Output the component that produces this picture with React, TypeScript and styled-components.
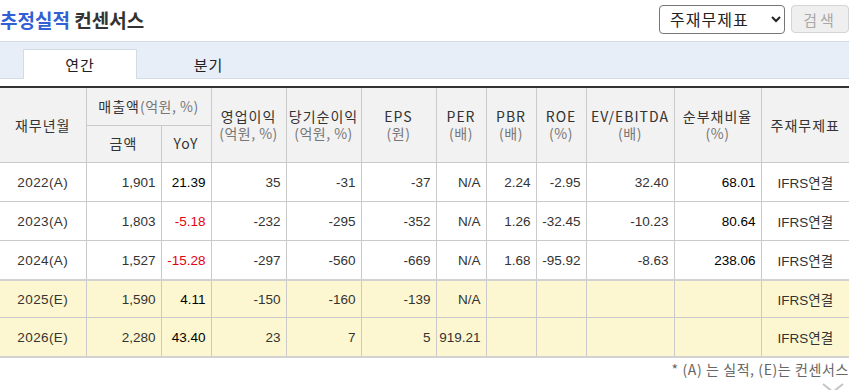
import React from 'react';
import styled, { createGlobalStyle } from 'styled-components';

const GlobalStyle = createGlobalStyle`
  body {
    margin: 0;
    background: #fff;
    font-family: "Liberation Sans", "Noto Sans CJK KR", sans-serif;
    color: #333;
  }
`;

const Page = styled.main`
  width: 849px;
`;

const TopBar = styled.header`
  display: flex;
  align-items: center;
  justify-content: space-between;
  height: 36px;
  padding-top: 2px;
  box-sizing: border-box;
`;

const Title = styled.h2`
  margin: 0;
  font-family: "Noto Sans CJK KR", sans-serif;
  font-size: 19px;
  font-weight: 700;
  color: #333;
`;

const TitleAccent = styled.span`
  color: #3161d4;
`;

const SearchBox = styled.div`
  display: flex;
  align-items: center;
  gap: 6px;
`;

const Select = styled.select`
  width: 126px;
  height: 29px;
  padding: 0 6px;
  border: 1px solid #767676;
  border-radius: 4px;
  background: #fff;
  font-family: "Noto Sans CJK KR", sans-serif;
  font-size: 16px;
  letter-spacing: 1px;
  color: #222;
`;

const SearchButton = styled.button`
  width: 58px;
  height: 28px;
  border: 1px solid #d4d4d4;
  border-radius: 4px;
  background: #efefef;
  color: #a8a8a8;
  font-family: "Noto Sans CJK KR", sans-serif;
  font-size: 15px;
  letter-spacing: 3px;
`;

const TabBar = styled.nav`
  display: flex;
  align-items: flex-end;
  height: 36px;
  margin-top: 5px;
  padding-left: 23px;
  background: #e8eef8;
  border-top: 1px solid #d3dbe6;
  border-bottom: 1px solid #d3dbe6;
`;

const Tab = styled.div<{ $active?: boolean }>`
  box-sizing: border-box;
  display: flex;
  align-items: center;
  justify-content: center;
  height: 30px;
  margin-bottom: -1px;
  width: ${(p) => (p.$active ? '114px' : '143px')};
  background: ${(p) => (p.$active ? '#fff' : 'transparent')};
  border: 1px solid ${(p) => (p.$active ? '#d3dbe6' : 'transparent')};
  border-bottom: none;
  font-family: "Noto Sans CJK KR", sans-serif;
  font-size: 15px;
  letter-spacing: 1px;
  color: #222;
`;

const Table = styled.table`
  width: 849px;
  margin-top: 7px;
  border-collapse: collapse;
  table-layout: fixed;
  border-top: 2px solid #333;
  border-bottom: 2px solid #d2d2d2;
  font-size: 13.5px;
`;

const HeadCell = styled.th`
  height: 36.5px;
  padding: 0;
  background: #f2f2f2;
  border: 1px solid #cacaca;
  border-top: none;
  font-family: "Noto Sans CJK KR", sans-serif;
  font-weight: 400;
  font-size: 14px;
  letter-spacing: 1px;
  line-height: 17px;
  color: #333;
  &:first-child { border-left: none; }
  &:last-child { border-right: none; }
`;

const Unit = styled.span`
  color: #777;
  letter-spacing: 0.5px;
`;

const Row = styled.tr<{ $estimate?: boolean; $split?: boolean }>`
  background: ${(p) => (p.$estimate ? '#fdf7d1' : '#fff')};
  border-top: ${(p) => (p.$split ? '2px solid #d2d2d2' : 'none')};
  & > td { height: ${(p) => (p.$split ? '36px' : '38px')}; }
`;

const Cell = styled.td<{ $align?: 'left' | 'center' | 'right'; $tone?: 'strong' | 'neg' }>`
  padding: 0 5px 0 0;
  border: 1px solid #cacaca;
  border-top: none;
  text-align: ${(p) => p.$align ?? 'right'};
  color: ${(p) => (p.$tone === 'strong' ? '#000' : p.$tone === 'neg' ? '#e60012' : '#333')};
  white-space: nowrap;
  &:first-child { border-left: none; padding: 0; letter-spacing: 0.4px; }
  &:last-child { border-right: none; padding: 0; }
`;

const Note = styled.p`
  margin: 2px 0 0;
  text-align: right;
  font-family: "Noto Sans CJK KR", sans-serif;
  font-size: 14px;
  line-height: 18px;
  letter-spacing: 0.6px;
  color: #666;
`;

const More = styled.div`
  display: flex;
  justify-content: flex-end;
  padding-right: 4px;
  margin-top: 4px;
`;

type Tone = 'strong' | 'neg' | undefined;
type Line = {
  period: string;
  estimate?: boolean;
  cells: [string, Tone][];
};

const rows: Line[] = [
  {
    period: '2022(A)',
    cells: [['1,901', undefined], ['21.39', 'strong'], ['35', undefined], ['-31', undefined], ['-37', undefined], ['N/A', undefined], ['2.24', undefined], ['-2.95', undefined], ['32.40', undefined], ['68.01', 'strong']],
  },
  {
    period: '2023(A)',
    cells: [['1,803', undefined], ['-5.18', 'neg'], ['-232', undefined], ['-295', undefined], ['-352', undefined], ['N/A', undefined], ['1.26', undefined], ['-32.45', undefined], ['-10.23', undefined], ['80.64', 'strong']],
  },
  {
    period: '2024(A)',
    cells: [['1,527', undefined], ['-15.28', 'neg'], ['-297', undefined], ['-560', undefined], ['-669', undefined], ['N/A', undefined], ['1.68', undefined], ['-95.92', undefined], ['-8.63', undefined], ['238.06', 'strong']],
  },
  {
    period: '2025(E)',
    estimate: true,
    cells: [['1,590', undefined], ['4.11', 'strong'], ['-150', undefined], ['-160', undefined], ['-139', undefined], ['N/A', undefined], ['', undefined], ['', undefined], ['', undefined], ['', undefined]],
  },
  {
    period: '2026(E)',
    estimate: true,
    cells: [['2,280', undefined], ['43.40', 'strong'], ['23', undefined], ['7', undefined], ['5', undefined], ['919.21', undefined], ['', undefined], ['', undefined], ['', undefined], ['', undefined]],
  },
];

const widths = [86, 75, 50, 75, 75, 75, 50, 50, 50, 88, 87, 88];

const App: React.FC = () => {
  return (
    <Page>
      <GlobalStyle />
      <TopBar>
        <Title>
          <TitleAccent>추정실적</TitleAccent> 컨센서스
        </Title>
        <SearchBox>
          <Select defaultValue="main">
            <option value="main">주재무제표</option>
          </Select>
          <SearchButton disabled>검색</SearchButton>
        </SearchBox>
      </TopBar>

      <TabBar>
        <Tab $active>연간</Tab>
        <Tab>분기</Tab>
      </TabBar>

      <Table>
        <colgroup>
          {widths.map((w, i) => (
            <col key={i} style={{ width: w }} />
          ))}
        </colgroup>
        <thead>
          <tr>
            <HeadCell rowSpan={2}>재무년월</HeadCell>
            <HeadCell colSpan={2}>
              매출액<Unit>(억원, %)</Unit>
            </HeadCell>
            <HeadCell rowSpan={2}>
              영업이익
              <br />
              <Unit>(억원, %)</Unit>
            </HeadCell>
            <HeadCell rowSpan={2}>
              당기순이익
              <br />
              <Unit>(억원, %)</Unit>
            </HeadCell>
            <HeadCell rowSpan={2}>
              EPS
              <br />
              <Unit>(원)</Unit>
            </HeadCell>
            <HeadCell rowSpan={2}>
              PER
              <br />
              <Unit>(배)</Unit>
            </HeadCell>
            <HeadCell rowSpan={2}>
              PBR
              <br />
              <Unit>(배)</Unit>
            </HeadCell>
            <HeadCell rowSpan={2}>
              ROE
              <br />
              <Unit>(%)</Unit>
            </HeadCell>
            <HeadCell rowSpan={2}>
              EV/EBITDA
              <br />
              <Unit>(배)</Unit>
            </HeadCell>
            <HeadCell rowSpan={2}>
              순부채비율
              <br />
              <Unit>(%)</Unit>
            </HeadCell>
            <HeadCell rowSpan={2}>주재무제표</HeadCell>
          </tr>
          <tr>
            <HeadCell>금액</HeadCell>
            <HeadCell>YoY</HeadCell>
          </tr>
        </thead>
        <tbody>
          {rows.map((r, i) => (
            <Row key={r.period} $estimate={r.estimate} $split={i === 3}>
              <Cell $align="center">{r.period}</Cell>
              {r.cells.map(([v, tone], j) => (
                <Cell key={j} $tone={tone}>
                  {v}
                </Cell>
              ))}
              <Cell $align="center">IFRS연결</Cell>
            </Row>
          ))}
        </tbody>
      </Table>

      <Note>* (A) 는 실적, (E)는 컨센서스</Note>
      <More>
        <svg width="24" height="12" viewBox="0 0 24 12" fill="none">
          <path d="M2 2 L12 10 L22 2" stroke="#c4c4c4" strokeWidth="2" />
        </svg>
      </More>
    </Page>
  );
};

export default App;
